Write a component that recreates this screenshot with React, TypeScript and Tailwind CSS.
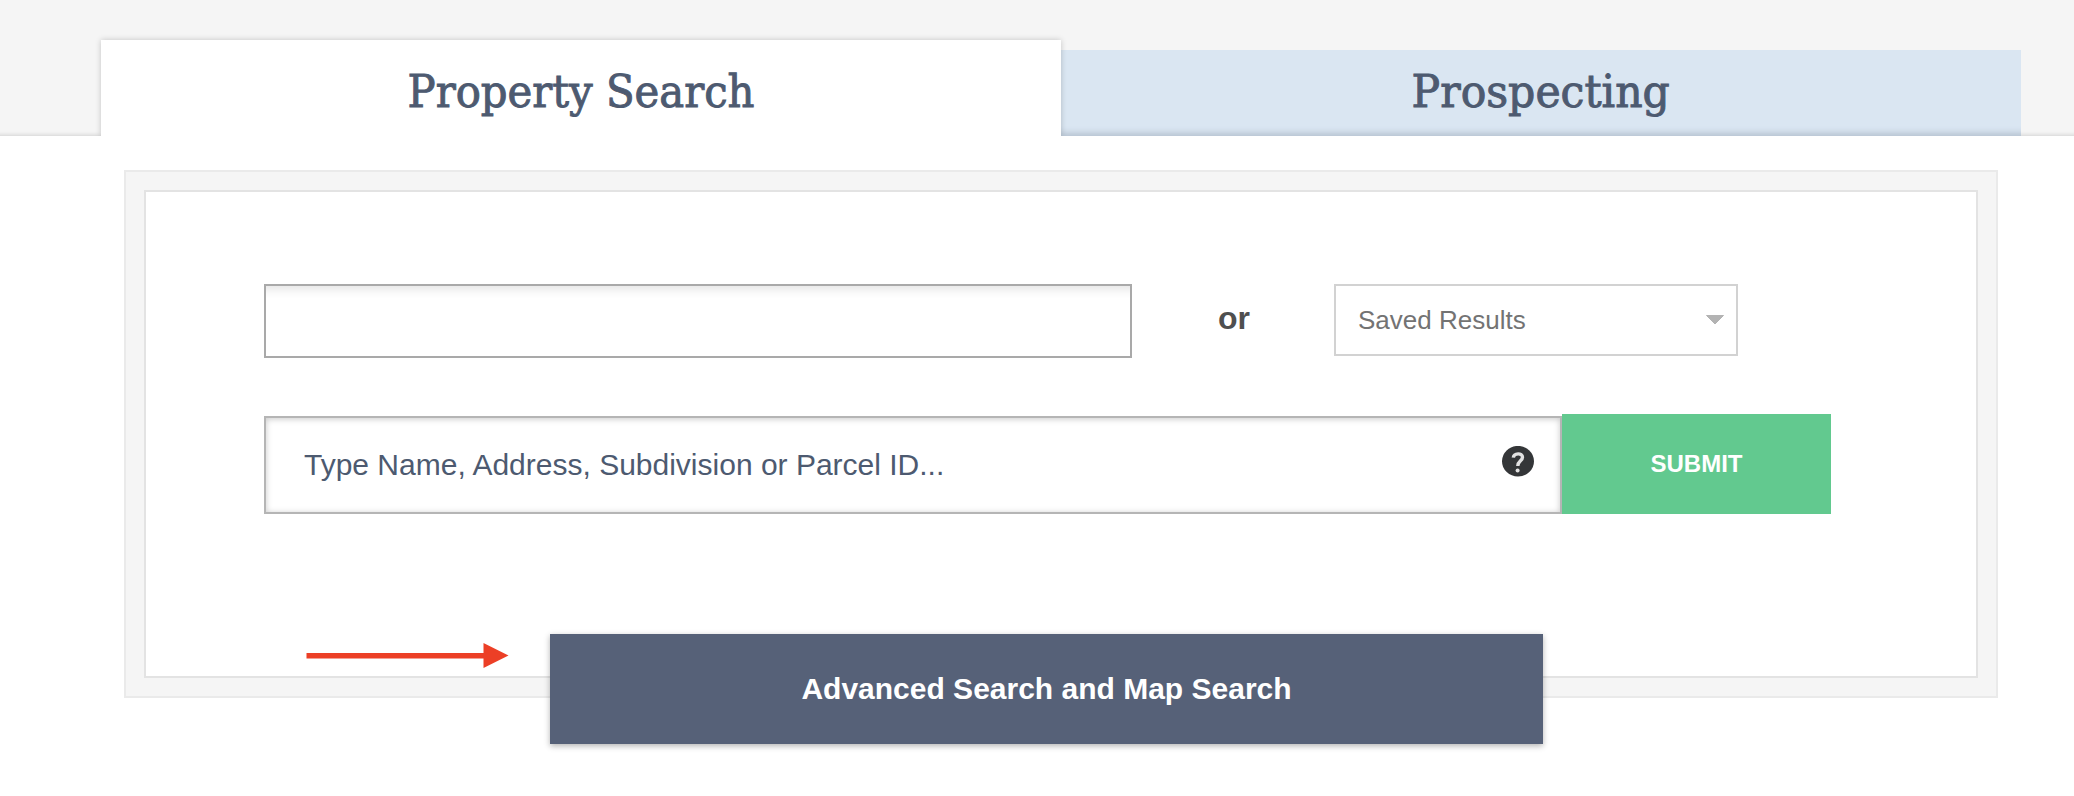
function HelpIcon() {
    return (
        <svg width="32" height="32" viewBox="0 0 32 32" className="shrink-0">
            <ellipse cx="16" cy="15.2" rx="16" ry="15.3" fill="#343638" />
            <path
                d="M11.3 11.600c.6-4.800 9.200-4.900 9.200-.4 0 3.800-4.600 3.400-4.700 8.800"
                fill="none"
                stroke="#e2e2e2"
                strokeWidth="3.400"
            />
            <circle cx="15.600" cy="24.400" r="2" fill="#e2e2e2" />
        </svg>
    );
}

function Tabs() {
    return (
        <header className="flex h-[136px] items-end overflow-hidden bg-[#f5f5f5] pl-[101px] shadow-[inset_0_-7px_4px_-6px_rgba(0,0,0,0.14)]">
            <div className="relative z-10 flex h-24 w-[960px] justify-center bg-white pt-[25px] shadow-[0_0_6px_rgba(0,0,0,0.2)]">
                <h2 className="origin-center scale-x-[1.032] whitespace-nowrap font-['Roboto_Slab','DejaVu_Serif_Condensed','DejaVu_Serif',serif] text-[45px] leading-[54px] text-[#4d5a70] [-webkit-text-stroke:0.9px_#4d5a70] [font-stretch:condensed]">
                    Property Search
                </h2>
            </div>
            <div className="flex h-[86px] w-[960px] justify-center bg-[#dae6f2] pt-[15px] shadow-[inset_0_-10px_6px_-7px_rgba(77,90,112,0.25)]">
                <h2 className="origin-center scale-x-[1.052] whitespace-nowrap font-['Roboto_Slab','DejaVu_Serif_Condensed','DejaVu_Serif',serif] text-[45px] leading-[54px] text-[#4d5a70] [-webkit-text-stroke:0.9px_#4d5a70] [font-stretch:condensed]">
                    Prospecting
                </h2>
            </div>
        </header>
    );
}

export default function App() {
    return (
        <div className="h-[796px] w-[2074px] overflow-hidden bg-white font-['Liberation_Sans',Arial,sans-serif]">
            <Tabs />

            {/* Search panel */}
            <main className="relative mt-[34px] ml-[124px] h-[528px] w-[1874px] border-2 border-[#eaeaea] bg-[#f5f5f5] p-[18px]">
                <div className="h-[488px] border-2 border-[#e3e3e3] bg-white pt-[92px] pl-[118px]">
                    <div className="flex items-start">
                        <div className="h-[74px] w-[868px] border-2 border-[#a9a9a9] shadow-[inset_0_14px_10px_-10px_rgba(0,0,0,0.1)]"></div>
                        <span className="w-[202px] pt-4 pl-0.5 text-center text-[32px] leading-9 font-bold text-[#4f4f4f]">
                            or
                        </span>
                        <div className="flex h-[72px] w-[404px] items-center justify-between border-2 border-[#d2d2d2] pr-[11px] pl-[22px] text-[26px] text-[#737373]">
                            <span>Saved Results</span>
                            <svg width="20" height="12" viewBox="0 0 20 12">
                                <path d="M1.500 1.500h17l-8.500 8.500z" fill="#b3b3b3" stroke="#b3b3b3" strokeLinejoin="round" />
                            </svg>
                        </div>
                    </div>

                    <div className="mt-14 flex items-end">
                        <div className="flex h-[98px] w-[1298px] items-center justify-between border-2 border-[#b5b5b5] pr-[26px] pl-[38px] text-[30px] text-[#4d5a70] shadow-[inset_0_1px_6px_rgba(0,0,0,0.22)]">
                            <span className="pb-0.5">Type Name, Address, Subdivision or Parcel ID...</span>
                            <div className="pb-1.5">
                                <HelpIcon />
                            </div>
                        </div>
                        <button className="h-[100px] w-[269px] bg-[#62c98f] text-2xl font-bold text-white">SUBMIT</button>
                    </div>
                </div>

                {/* Arrow pointing at the advanced search button */}
                <svg className="absolute top-[470px] left-[180px]" width="204" height="28" viewBox="0 0 204 28">
                    <path d="M.5 13.800h180" stroke="#ec3f26" strokeWidth="5.500" />
                    <path d="M177.500 1l25 12.500-25 12.500z" fill="#ec3f26" />
                </svg>

                <button className="absolute top-[462px] left-[424px] h-[110px] w-[993px] bg-[#566178] pb-0.5 text-[30px] font-bold text-white shadow-[0_2px_6px_rgba(0,0,0,0.3)]">
                    Advanced Search and Map Search
                </button>
            </main>
        </div>
    );
}
